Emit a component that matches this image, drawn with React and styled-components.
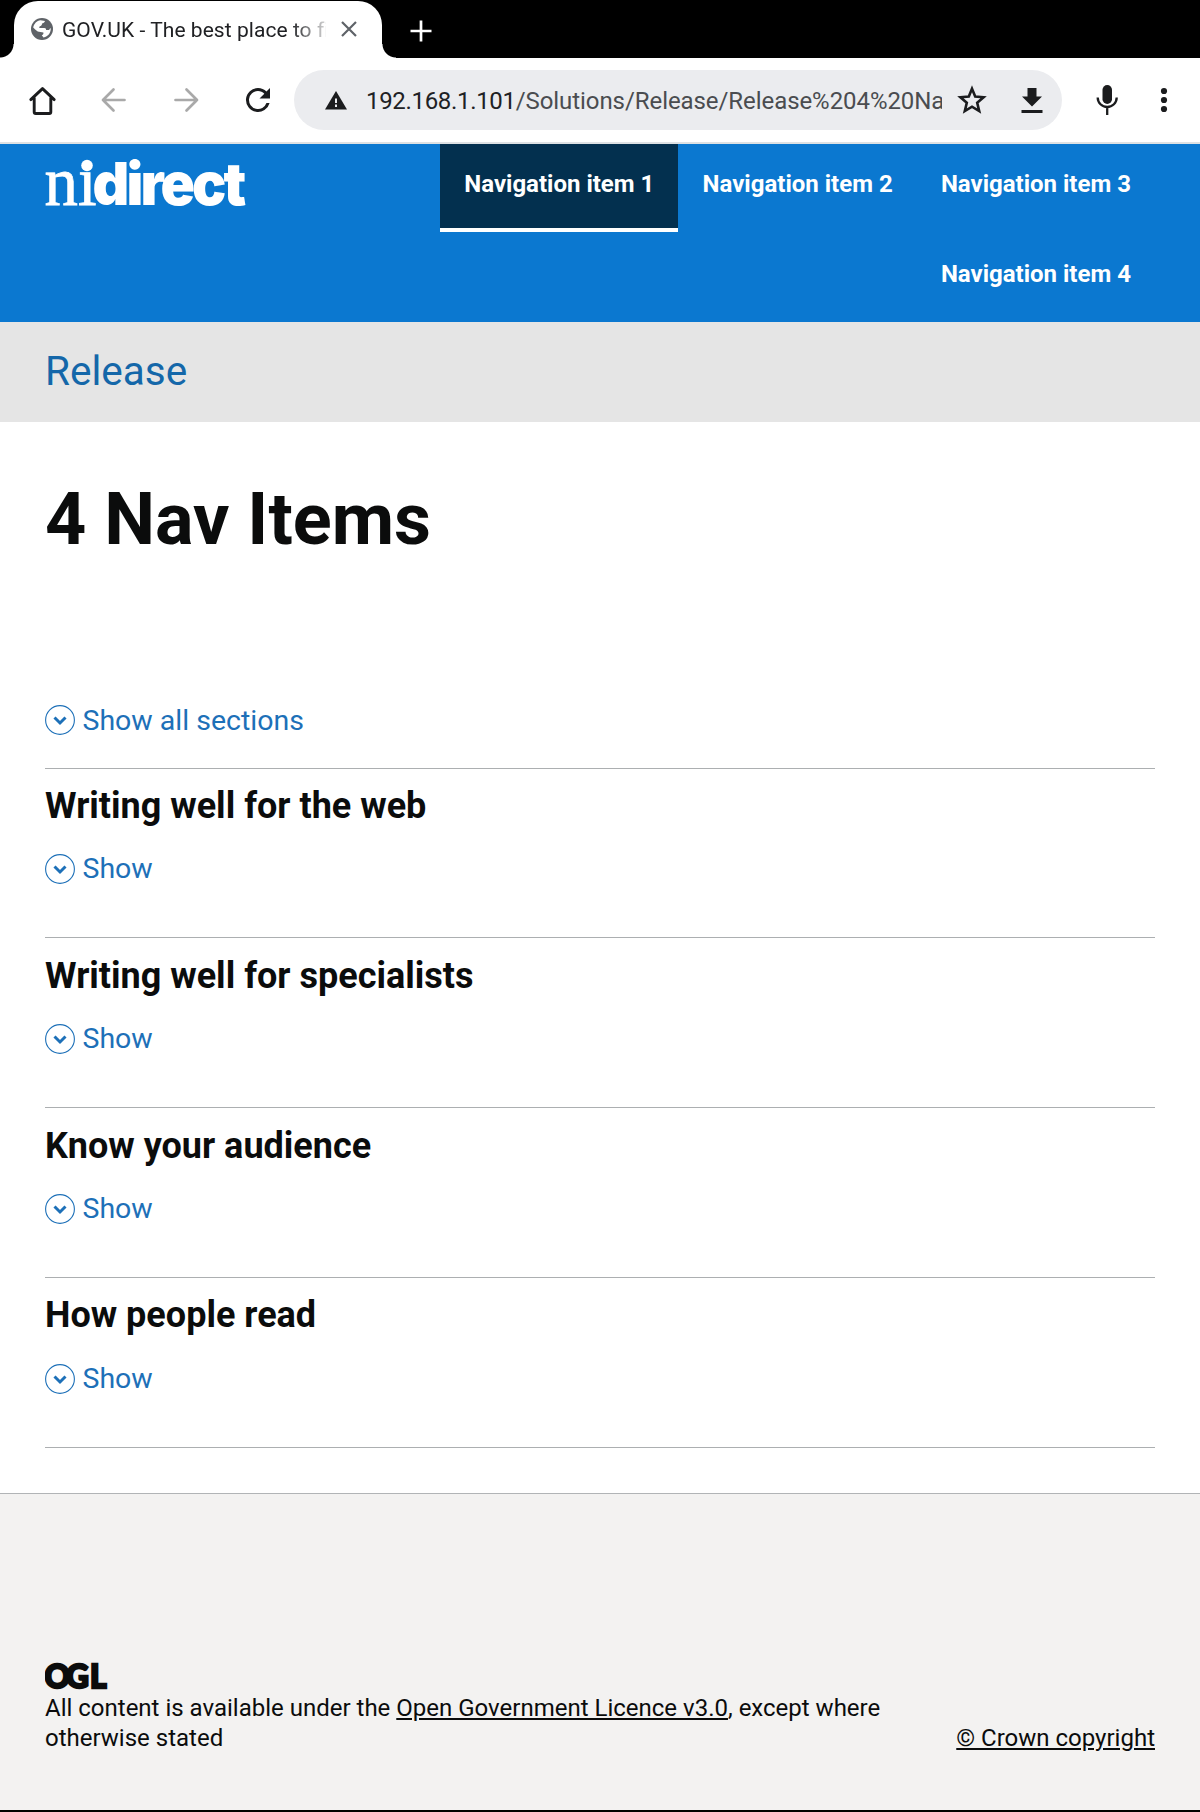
import React from "react";
import styled, { createGlobalStyle } from "styled-components";

const GlobalStyle = createGlobalStyle`
  * { box-sizing: border-box; }
  body { margin: 0; background: #000; font-family: Roboto, sans-serif; }
`;

const Screen = styled.div`
  display: flex;
  flex-direction: column;
  width: 1200px;
  height: 1810px;
  margin-bottom: 2px;
  overflow: hidden;
  background: #fff;
  color: #0b0c0c;
`;

/* Browser chrome */
const TabStrip = styled.div`
  display: flex;
  align-items: flex-start;
  height: 58px;
  flex: none;
  padding-left: 14px;
  background: #000;
`;

const Tab = styled.div`
  position: relative;
  display: flex;
  align-items: center;
  width: 368px;
  height: 57px;
  margin-top: 1px;
  padding: 0 25px 1px 17px;
  border-radius: 24px 24px 0 0;
  background: #fff;
  &::before, &::after {
    content: "";
    position: absolute;
    bottom: 0;
    width: 14px;
    height: 14px;
  }
  &::before { left: -14px; background: radial-gradient(circle at 0 0, #000 13px, #fff 14px); }
  &::after { right: -14px; background: radial-gradient(circle at 100% 0, #000 13px, #fff 14px); }
`;

const TabTitle = styled.span`
  flex: 1;
  margin: 1px 15px 0 9px;
  overflow: hidden;
  white-space: nowrap;
  font-size: 21px;
  line-height: 28px;
  letter-spacing: 0.05px;
  color: #202124;
  mask-image: linear-gradient(to right, #000 228px, transparent 272px);
`;

const NewTab = styled.div`
  display: flex;
  margin: 20px 0 0 27.5px;
`;

const Toolbar = styled.div`
  display: flex;
  align-items: center;
  height: 86px;
  flex: none;
  padding-left: 24px;
  border-bottom: 2px solid #dee1e4;
  background: #fff;
`;

const ToolIcon = styled.span`
  display: flex;
  flex: none;
  width: 36px;
  height: 36px;
  margin-right: ${(p) => p.$gap || 0}px;
`;

const AddressBar = styled.div`
  display: flex;
  align-items: center;
  width: 768px;
  height: 60px;
  margin-right: 27px;
  padding: 0 12px 0 24px;
  border-radius: 30px;
  background: #ebecef;
`;

const Address = styled.span`
  width: 577px;
  margin: 2px 12px 0 12px;
  overflow: hidden;
  white-space: nowrap;
  font-size: 24px;
  line-height: 32px;
  letter-spacing: -0.07px;
  color: #4a4c50;
`;

const Host = styled.span`
  letter-spacing: -0.32px;
  color: #202124;
`;

/* Site header */
const Header = styled.header`
  display: flex;
  justify-content: space-between;
  align-items: flex-start;
  height: 178px;
  flex: none;
  padding: 0 45px;
  background: #0b78d0;
`;

const LogoBox = styled.div`
  display: flex;
  padding-top: 8px;
`;

const Nav = styled.nav`
  display: flex;
  flex-wrap: wrap;
  justify-content: flex-end;
  row-gap: 2px;
  width: 715px;
`;

const NavItem = styled.a`
  width: 238.3px;
  height: 88px;
  padding: 20px 0 0 24.2px;
  border-bottom: 4px solid ${(p) => (p.$active ? "#fff" : "transparent")};
  background: ${(p) => (p.$active ? "#03304f" : "transparent")};
  background-clip: padding-box;
  white-space: nowrap;
  font-size: 24px;
  font-weight: 700;
  line-height: 40px;
  color: #fff;
`;

const ProductBar = styled.div`
  display: flex;
  align-items: center;
  height: 100px;
  flex: none;
  padding: 0 45px 2px;
  background: #e5e5e5;
  font-size: 40.5px;
  color: #1467a9;
`;

/* Main content */
const Main = styled.main`
  flex: none;
  height: 1071px;
  padding: 58px 45px 0;
`;

const Title = styled.h1`
  margin: 0 0 143px;
  font-size: 72px;
  line-height: 80px;
  font-weight: 700;
`;

const Toggle = styled.a`
  display: flex;
  align-items: center;
  height: 34px;
  gap: 7.5px;
  font-size: 28.5px;
  line-height: 34px;
  color: #1d70b8;
`;

const ToggleLabel = styled.span`
  margin-top: ${(p) => p.$drop || 0}px;
`;

const Sections = styled.div`
  margin-top: 30.6px;
  border-bottom: 1px solid #acafb1;
`;

const Section = styled.section`
  height: 169.75px;
  padding-top: 15.5px;
  border-top: 1px solid #acafb1;
`;

const SectionTitle = styled.h2`
  margin: 0 0 24.2px;
  font-size: 36px;
  line-height: 44px;
  font-weight: 700;
`;

/* Footer */
const Footer = styled.footer`
  display: flex;
  justify-content: space-between;
  align-items: flex-end;
  flex: 1;
  padding: 0 45px 57px;
  border-top: 1px solid #b1b4b6;
  background: #f3f2f1;
  font-size: 24px;
  line-height: 30px;
`;

const Licence = styled.div`
  display: flex;
  flex-direction: column;
  width: 850px;
`;

const LicenceText = styled.span`
  padding-top: 3px;
`;

const FooterLink = styled.a`
  color: #0b0c0c;
  text-decoration: underline;
  text-decoration-thickness: 2px;
  text-underline-offset: 2.4px;
`;

const Globe = () => (
  <svg width="22" height="22" viewBox="0 0 22 22">
    <circle cx="11" cy="11" r="11" fill="#5f6368" />
    <path d="M9.5 2.2 14 3c-.4 1.7-1.8 2.2-3 2.6.2 1.6-.7 2.5-2.3 2.6l-.5 1.7h5.2c1.2 0 1.8.9 1.7 2.1l3 .1c.5-1 .9-1.600 1.600-2.100.4 4.500-2.500 8.700-7.200 9.500l-1.700-2.200c1.400-.5 1.800-1.500 1.600-2.800L8 13.800c-1.600-.2-3.400-1.800-5.800-4.300C3 5.500 5.700 2.800 9.500 2.200z" fill="#fff" />
  </svg>
);

const CloseIcon = () => (
  <svg width="16" height="16" viewBox="0 0 16 16" stroke="#5f6368" strokeWidth="2.200">
    <path d="M1 1 15 15M15 1 1 15" />
  </svg>
);

const PlusIcon = () => (
  <svg width="22" height="22" viewBox="0 0 22 22" stroke="#fff" strokeWidth="2.700">
    <path d="M11 .5v21M.5 11h21" />
  </svg>
);

const HomeIcon = () => (
  <svg width="36" height="36" viewBox="0 0 36 36" fill="none" stroke="#1b1c1e" strokeWidth="2.900" strokeLinecap="round" strokeLinejoin="round">
    <path d="M6.800 17.600 18.500 6.600 30.200 17.600M10.200 16v14q0 1.500 1.500 1.500h13.600q1.500 0 1.500-1.500V16" />
  </svg>
);

const ArrowIcon = ({ flip }) => (
  <svg width="36" height="36" viewBox="0 0 36 36" fill="none" stroke="#a9a9a9" strokeWidth="2.700" strokeLinecap="round" strokeLinejoin="round">
    <path d={flip ? "M7.500 18H29M18.500 7.500 29 18 18.500 28.500" : "M28.500 18H7M17.500 7.500 7 18 17.500 28.500"} />
  </svg>
);

const ReloadIcon = () => (
  <svg width="36" height="36" viewBox="0 0 24 24" fill="#1b1c1e">
    <path d="M17.650 6.350A7.960 7.960 0 0 0 12 4a8 8 0 1 0 7.730 10h-2.080A6 6 0 1 1 12 6c1.660 0 3.140.69 4.220 1.780L13 11h7V4z" />
  </svg>
);

const WarningIcon = () => (
  <svg width="36" height="36" viewBox="0 0 36 36">
    <path d="M18 9 29 27.500H7z" fill="#1b1c1e" />
    <path d="M18 16.500v4.500M18 22.500v2.500" stroke="#ebecef" strokeWidth="2" />
  </svg>
);

const StarIcon = () => (
  <svg width="36" height="36" viewBox="0 0 36 36" fill="none" stroke="#1b1c1e" strokeWidth="2.600">
    <path d="M18 6.800 21.200 14.600 29.600 15.300 23.200 20.800 25.200 29.100 18 24.700 10.800 29.100 12.800 20.800 6.400 15.300 14.800 14.600z" />
  </svg>
);

const DownloadIcon = () => (
  <svg width="36" height="36" viewBox="0 0 36 36" fill="#1b1c1e">
    <path d="M13.500 6h9v8.500H28L18 24.500 8 14.500h5.500zM7.500 28h21v3h-21z" />
  </svg>
);

const MicIcon = () => (
  <svg width="36" height="36" viewBox="0 0 36 36" fill="none" stroke="#1b1c1e" strokeWidth="2.300">
    <rect x="13.500" y="3" width="9.500" height="19" rx="4.750" fill="#1b1c1e" stroke="none" />
    <path d="M8.700 15.500a9.500 9.500 0 0 0 19 0M18.200 25v8" />
  </svg>
);

const MenuIcon = () => (
  <svg width="36" height="36" viewBox="0 0 36 36" fill="#1b1c1e">
    <circle cx="18" cy="9" r="3.100" />
    <circle cx="18" cy="18" r="3.100" />
    <circle cx="18" cy="27" r="3.100" />
  </svg>
);

const Chevron = () => (
  <svg width="30" height="30" viewBox="0 0 30 30" fill="none" stroke="#1d70b8">
    <circle cx="15" cy="15" r="14.400" strokeWidth="1.100" />
    <path d="M9.500 12.500 15 18 20.500 12.500" strokeWidth="3" />
  </svg>
);

const Logo = () => (
  <svg width="202" height="60" viewBox="0 0 202 60" fill="#fff" aria-label="nidirect">
    <clipPath id="stems"><rect x="0" y="19" width="60" height="41" /></clipPath>
    <g clipPath="url(#stems)">
      <text x="-.5" y="53" fontFamily="Liberation Serif, serif" fontSize="70" textLength="52" lengthAdjust="spacingAndGlyphs" stroke="#fff" strokeWidth=".8">ni</text>
    </g>
    <circle cx="42" cy="13.500" r="5.800" />
    <text x="47.500" y="53" fontFamily="Inter, sans-serif" fontWeight="900" fontSize="59.500" letterSpacing="-3" textLength="151" lengthAdjust="spacingAndGlyphs">direct</text>
  </svg>
);

const OglLogo = () => (
  <svg width="64" height="28" viewBox="0 0 64 28" fill="#0b0c0c">
    <text x="-.5 21 45" y="25.500" fontFamily="Lato, sans-serif" fontWeight="900" fontSize="31.500" stroke="#0b0c0c" strokeWidth="2.400">OGL</text>
  </svg>
);

const navItems = ["Navigation item 1", "Navigation item 2", "Navigation item 3", "Navigation item 4"];
const sections = ["Writing well for the web", "Writing well for specialists", "Know your audience", "How people read"];

export default function App() {
  return (
    <>
      <GlobalStyle />
      <Screen>
        <TabStrip>
          <Tab>
            <Globe />
            <TabTitle>GOV.UK - The best place to fi</TabTitle>
            <CloseIcon />
          </Tab>
          <NewTab><PlusIcon /></NewTab>
        </TabStrip>
        <Toolbar>
          <ToolIcon $gap={36}><HomeIcon /></ToolIcon>
          <ToolIcon $gap={36}><ArrowIcon /></ToolIcon>
          <ToolIcon $gap={36}><ArrowIcon flip /></ToolIcon>
          <ToolIcon $gap={18}><ReloadIcon /></ToolIcon>
          <AddressBar>
            <ToolIcon><WarningIcon /></ToolIcon>
            <Address><Host>192.168.1.101</Host>/Solutions/Release/Release%204%20Na</Address>
            <ToolIcon $gap={24}><StarIcon /></ToolIcon>
            <ToolIcon><DownloadIcon /></ToolIcon>
          </AddressBar>
          <ToolIcon $gap={21}><MicIcon /></ToolIcon>
          <ToolIcon><MenuIcon /></ToolIcon>
        </Toolbar>
        <Header>
          <LogoBox><Logo /></LogoBox>
          <Nav>
            {navItems.map((label, i) => (
              <NavItem key={label} $active={i === 0}>{label}</NavItem>
            ))}
          </Nav>
        </Header>
        <ProductBar>Release</ProductBar>
        <Main>
          <Title>4 Nav Items</Title>
          <Toggle><Chevron /><ToggleLabel $drop={2}>Show all sections</ToggleLabel></Toggle>
          <Sections>
            {sections.map((title) => (
              <Section key={title}>
                <SectionTitle>{title}</SectionTitle>
                <Toggle><Chevron /><ToggleLabel>Show</ToggleLabel></Toggle>
              </Section>
            ))}
          </Sections>
        </Main>
        <Footer>
          <Licence>
            <OglLogo />
            <LicenceText>
              All content is available under the <FooterLink>Open Government Licence v3.0</FooterLink>, except where otherwise stated
            </LicenceText>
          </Licence>
          <FooterLink>© Crown copyright</FooterLink>
        </Footer>
      </Screen>
    </>
  );
}
